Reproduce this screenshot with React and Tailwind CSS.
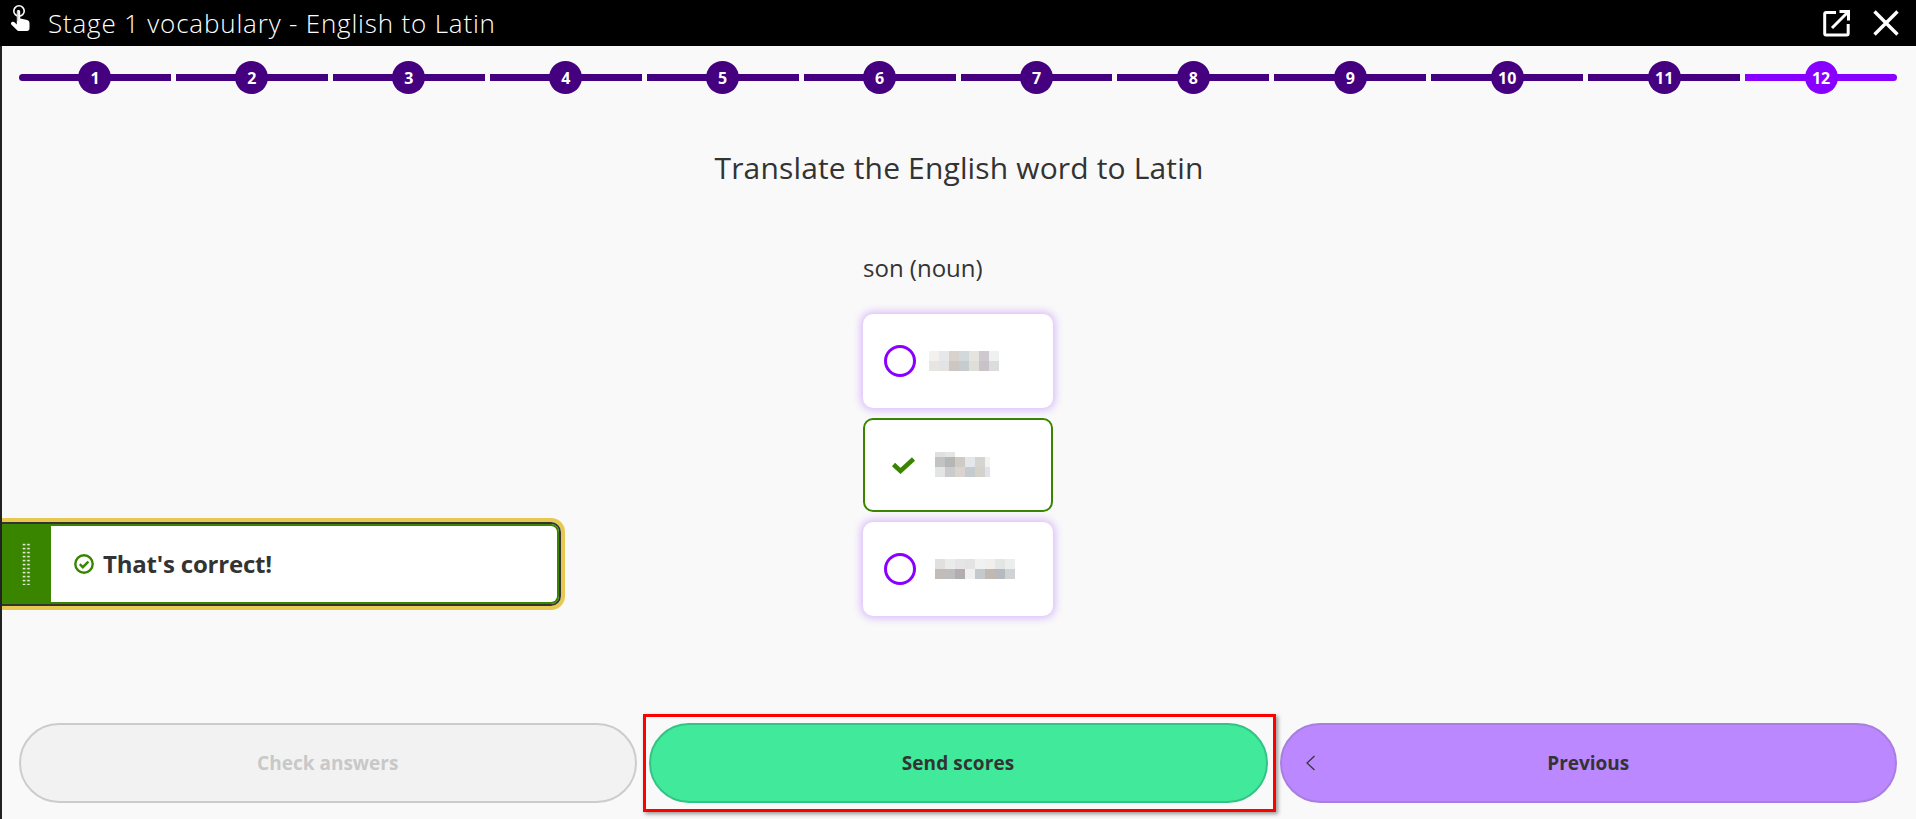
import React from "react";

const MUTED = "font-['Open_Sans','Liberation_Sans',sans-serif]";
const steps = [1,2,3,4,5,6,7,8,9,10,11,12];

function Mosaic({ rows, className }) {
  return (
    <div className={"flex flex-col " + className}>
      {rows.map((r, i) => (
        <div key={i} className="flex" style={{ height: r.h }}>
          {r.c.map((c, j) => (
            <div key={j} style={{ width: r.w && r.w[j] ? r.w[j] : 10, backgroundColor: c }} />
          ))}
        </div>
      ))}
    </div>
  );
}

function Radio() {
  return <div className="w-8 h-8 rounded-full border-[3px] border-[#8800ff] shrink-0" />;
}

function Hand() {
  return (
    <svg width="22" height="28" viewBox="0 0 22 28" className="shrink-0">
      <circle cx="9" cy="6" r="5.2" fill="none" stroke="#fff" strokeWidth="1.6" />
      <path d="M8.5 5c1 0 1.7.7 1.7 1.7v6.9l6 1.2c2 .4 3.3 1.4 3.3 3.4v5.3c0 1.3-1 2.5-2.5 2.5H9c-1 0-1.8-.4-2.4-1.2L1.3 19.5c-.7-1-.1-2.4 1-2.7 1-.3 2 .1 2.7 1l1.8 1.8V6.7c0-1 .7-1.7 1.7-1.7z" fill="#fff" />
      <path d="M7.7 6v10" stroke="#1e88e5" strokeWidth="1" opacity="0.5"/>
    </svg>
  );
}

export default function App() {
  return (
    <div className={"relative w-[1916px] h-[819px] overflow-hidden flex flex-col bg-[#f9f9f9] " + MUTED}>
      <header className="h-[46px] bg-black flex items-center shrink-0 text-white">
        <div className="ml-[10px] mr-[16px] flex self-start mt-[5px]"><Hand /></div>
        <span className="font-['Open_Sans',sans-serif] font-light text-[26px] tracking-[0.82px] whitespace-pre">Stage 1 vocabulary - English to Latin</span>
        <div className="ml-auto flex items-center">
          <svg width="28" height="28" viewBox="0 0 28 28" fill="none" stroke="#fff" strokeWidth="3" className="mr-[22px]">
            <path d="M13 3.5H3.2a1.5 1.5 0 0 0-1.5 1.5v19.5a1.5 1.5 0 0 0 1.5 1.5h20.5a1.5 1.5 0 0 0 1.5-1.5V15" />
            <path d="M9 19L25 3M16.5 2.5h9v9" />
          </svg>
          <svg width="26" height="26" viewBox="0 0 26 26" fill="none" stroke="#fff" strokeWidth="3.4" className="mr-[17px]">
            <path d="M1.5 1.5l23 23M24.5 1.5l-23 23" />
          </svg>
        </div>
      </header>

      <main className="relative flex-1 flex flex-col border-l-2 border-[#222222]">
        <div className="flex gap-[5px] pl-[17px] pr-[19px] pt-[15px]">
          {steps.map((n) => {
            const last = n === 12;
            return (
              <div key={n} className="relative flex-1 h-[33px] flex items-center justify-center">
                <div className={"absolute inset-x-0 top-[13px] h-[7px] " + (last ? "bg-[#8800ff] rounded-r-full" : "bg-[#450080]") + (n === 1 ? " rounded-l-full" : "")} />
                <div className={"relative w-[33px] h-[33px] rounded-full flex items-center justify-center text-white font-['Open_Sans',sans-serif] font-bold text-[16px] " + (last ? "bg-[#8800ff]" : "bg-[#450080]")}>{n}</div>
              </div>
            );
          })}
        </div>

        <h1 className="mt-[53px] text-center text-[#333333] font-normal text-[30px] leading-[42px] tracking-[0.15px]">Translate the English word to Latin</h1>

        <div className="mt-[64px] w-[190px] ml-[861px] flex flex-col">
          <p className="text-[#333333] text-[24px] leading-[30px] h-[34px]">son (noun)</p>
          <div className="mt-[27px] flex flex-col gap-[10px]">
            <div className="h-[94px] rounded-[10px] bg-white shadow-[0_0_9px_2px_#d8b8fa] flex items-center pl-[21px] gap-[13px]">
              <Radio />
              <Mosaic className="" rows={[
                { h: 10, c: ["#f2f1ef","#e6e7e9","#d8d2cf","#d3d8da","#e5e4df","#cfc9cf","#eff0f0"] },
                { h: 10, c: ["#e6e5e2","#e3e3e3","#cdc7c4","#c7cccf","#dfdfd9","#c9c2c8","#dcdcdf"] },
              ]} />
            </div>
            <div className="h-[94px] rounded-[10px] bg-white border-2 border-[#3a8500] flex items-center pl-[26px] gap-[19px]">
              <svg width="25" height="18" viewBox="0 0 25 18" fill="none" className="shrink-0">
                <path d="M2.5 8.5l7 6.5L22.5 3" stroke="#3a8500" strokeWidth="4.5" />
              </svg>
              <Mosaic className="mt-[-2px]" rows={[
                { h: 5, c: ["#e0e0e0","#e5e5e5"] },
                { h: 10, c: ["#c2c2c2","#b5b6b6","#cfcac4","#e3e6ea","#d5d4d0","#f3f3f3"], w: [10,10,10,10,10,5] },
                { h: 10, c: ["#e3e5e5","#cbcbcd","#d9d5ce","#c6cbd0","#d5d2cc","#e0e4ea"], w: [10,10,10,10,10,5] },
              ]} />
            </div>
            <div className="h-[94px] rounded-[10px] bg-white shadow-[0_0_9px_2px_#d8b8fa] flex items-center pl-[21px] gap-[19px]">
              <Radio />
              <Mosaic className="" rows={[
                { h: 10, c: ["#e2e0de","#ebebeb","#e6e5e5","#e3e3e3","#f1f1f1","#f0efed","#e4e5e5","#eceded"] },
                { h: 10, c: ["#c2bcb9","#bdbdbe","#b3acb1","#eff0ef","#c4c9cc","#c2b8b2","#b6babe","#d0d3d5"] },
              ]} />
            </div>
          </div>
        </div>

        <div className="mt-auto mb-[16px] pl-[17px] pr-[19px] flex gap-3 h-[80px]">
          <button className="w-[617.5px] rounded-[40px] border-2 border-[#cccccc] bg-[#f2f2f2] text-[#c8c8c8] font-bold text-[19px]">Check answers</button>
          <div className="relative w-[619px] flex">
            <button className="flex-1 rounded-[40px] border-2 border-[#33c386] bg-[#40ea9a] text-[#333333] font-bold text-[19px] tracking-[0.1px]">Send scores</button>
            <div className="absolute -left-[6px] -right-[8px] -top-[9px] -bottom-[9px] border-[3px] border-[#ff0000] shadow-[2px_2px_4px_rgba(0,0,0,0.4)]" />
          </div>
          <button className="relative w-[617.5px] rounded-[40px] border-2 border-[#a87ee0] bg-[#bb88ff] text-[#333333] font-bold text-[19px]">
            <svg width="11" height="16" viewBox="0 0 11 16" fill="none" stroke="#333333" strokeWidth="1.2" className="absolute left-[23px] top-[30px]">
              <path d="M9.5 1L2 8l7.5 7" />
            </svg>
            Previous
          </button>
        </div>

        <div className="absolute left-0 top-[472px] w-[563px] h-[92px] rounded-r-[14px] border-y-4 border-r-4 border-[#e8c94f]">
          <div className="h-full rounded-r-[10px] border-y-2 border-r-2 border-[#333333]">
            <div className="h-full flex rounded-r-[8px] border-y-2 border-r-2 border-[#3a8500] bg-white">
              <div className="w-[49px] bg-[#3a8500] flex items-center justify-center shrink-0">
                <svg width="9" height="42" viewBox="0 0 9 42" className="ml-[-1px]">
                  <defs>
                    <pattern id="dots" width="4.5" height="4" patternUnits="userSpaceOnUse">
                      <rect x="0.7" y="0.8" width="2.6" height="1.6" fill="#e8efe2" />
                    </pattern>
                  </defs>
                  <rect width="9" height="42" fill="url(#dots)" />
                </svg>
              </div>
              <div className="flex items-center pl-[23px] gap-[9px] text-[#333333] font-bold text-[24px] tracking-[-0.2px]">
                <svg width="20" height="20" viewBox="0 0 20 20" fill="none" stroke="#3a8500" className="shrink-0">
                  <circle cx="10" cy="10" r="8.7" strokeWidth="2.4" />
                  <path d="M5.8 10.2l3 3 5.6-5.6" strokeWidth="2.4" />
                </svg>
                <span>That's correct!</span>
              </div>
            </div>
          </div>
        </div>
      </main>
    </div>
  );
}
